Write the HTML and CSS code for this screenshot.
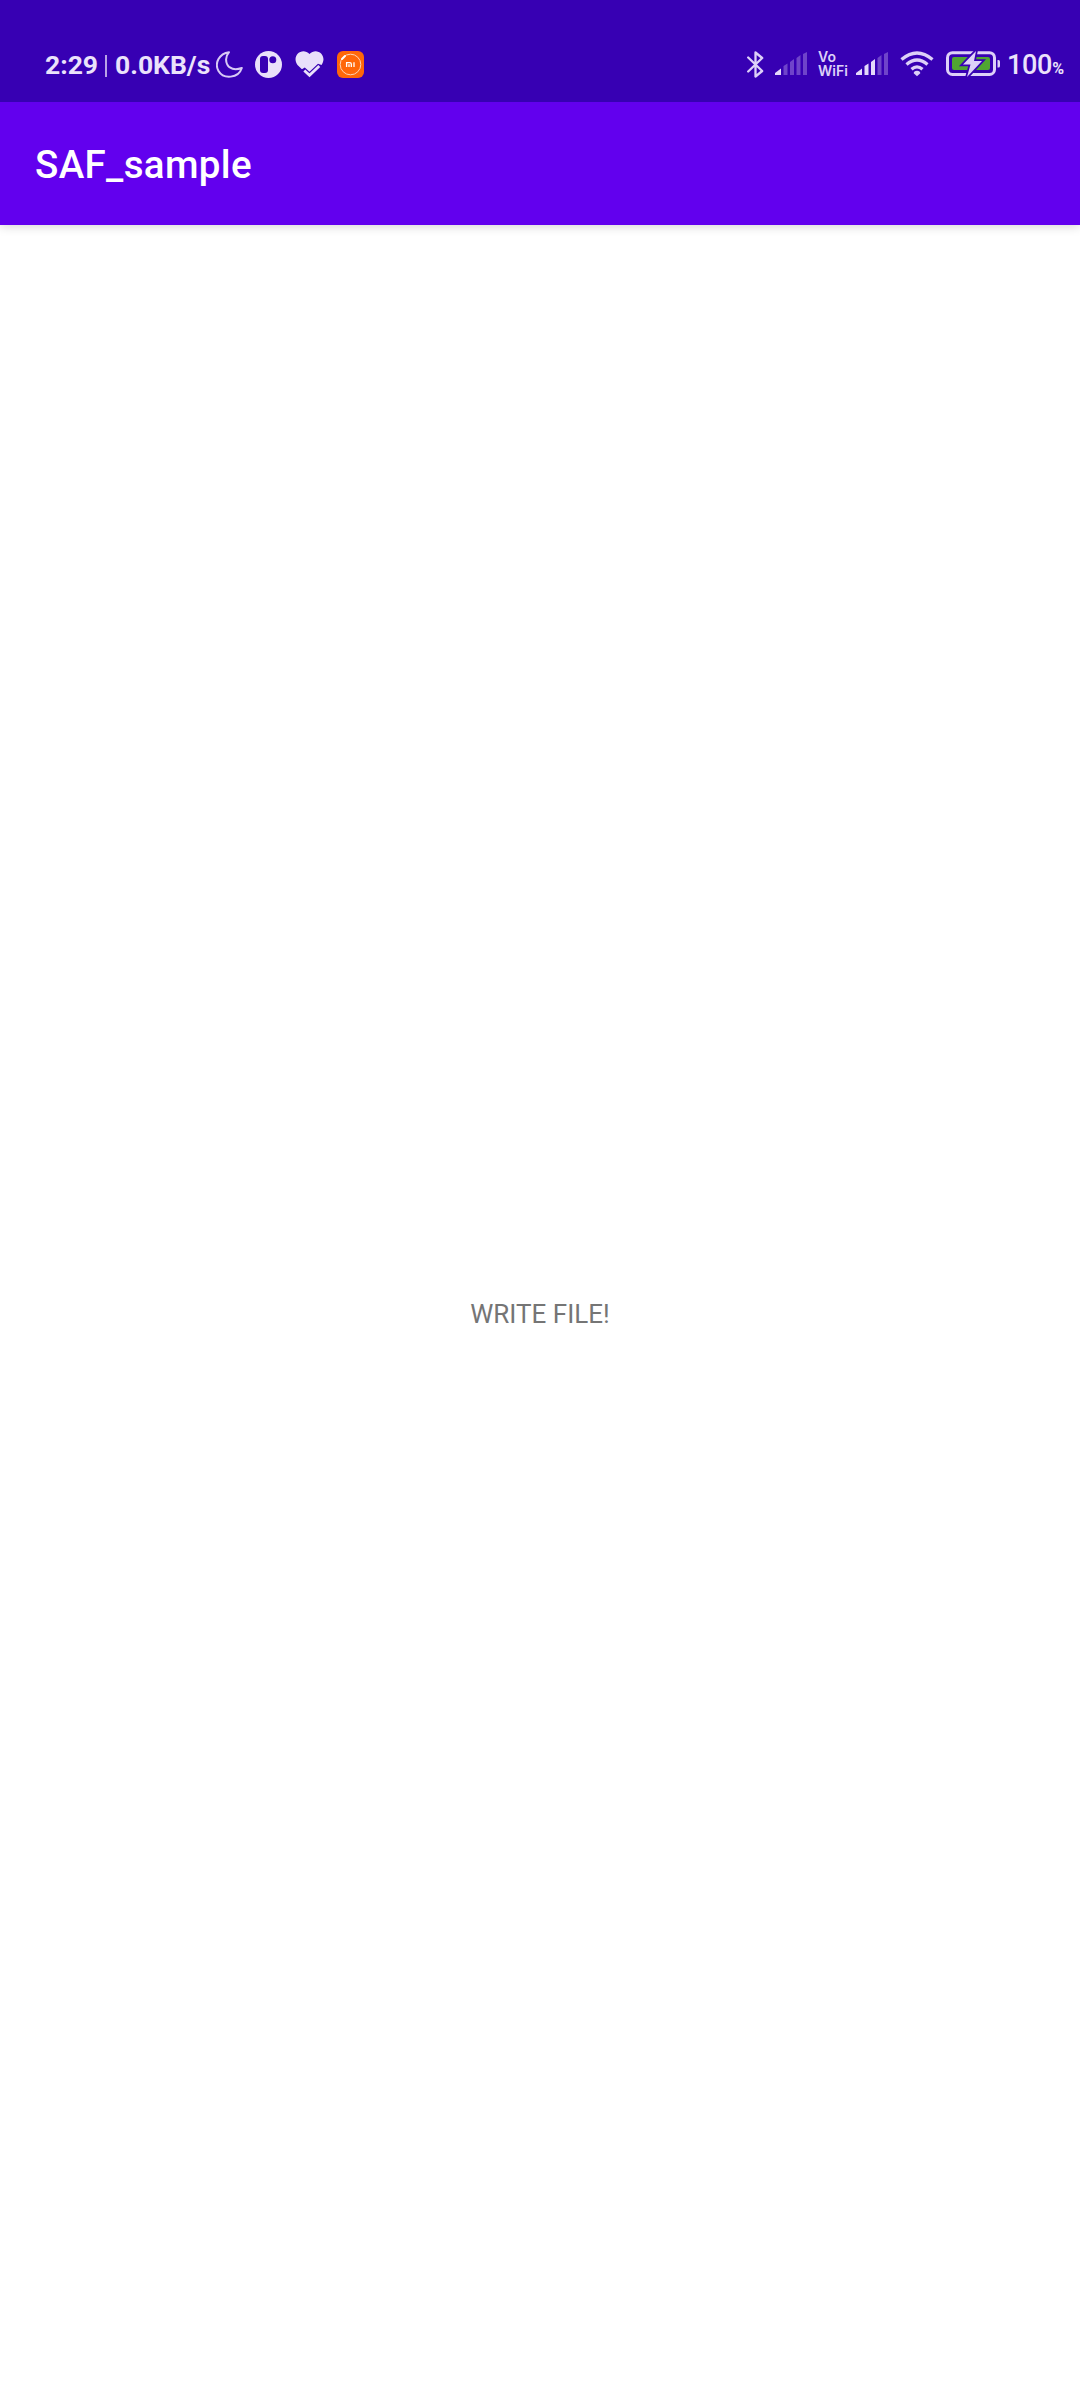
FILE: index.html
```html
<!DOCTYPE html>
<html lang="en">
<head>
<meta charset="utf-8">
<title>SAF_sample</title>
<link rel="stylesheet" href="styles.css">
</head>
<body>
<div class="screen">
  <header class="status">
    <div class="status-left">
      <span class="clock">2:29</span>
      <span class="divider"></span>
      <span class="speed">0.0KB/s</span>
      <svg class="icon moon" width="28" height="28" viewBox="0 0 28 28"><path d="M13 1.200C3.500 2.500-2 12 2.500 20c5 8.500 20 7.500 23.300-3C19 19.500 13 18 11 13c-1.600-4-.8-8.500 2-11.800z" fill="none" stroke="#d8c9f6" stroke-width="2" stroke-linejoin="round"/></svg>
      <svg class="icon round" width="27" height="27" viewBox="0 0 27 27"><circle cx="13.500" cy="13.500" r="13.500" fill="#e9e0fa"/><rect x="5" y="5" width="8" height="17" rx="3" fill="#3700b3"/><circle cx="17.800" cy="8.700" r="3.500" fill="#3700b3"/></svg>
      <svg class="icon heart" width="29" height="27" viewBox="0 0 29 27"><path d="M14.500 25.500 2.500 14C-4 5 7-4.500 14.500 3 22-4.500 33 5 26.500 14z" fill="#e9e0fa"/><path d="M6.500 18.500 9.800 16.500l4.700 4.200 8.500-8 3.500 1.300 2.500 0v13H6z" fill="#3700b3"/><path d="m9.300 19.500 5.200 4.800 9.800-9.300" fill="none" stroke="#e9e0fa" stroke-width="2.800"/></svg>
      <svg class="icon mi" width="27" height="27" viewBox="0 0 27 27"><rect width="27" height="27" rx="6" fill="#ff6709"/><circle cx="13.500" cy="13.500" r="10.300" fill="none" stroke="#ffd5b5" stroke-width="1"/><path d="m5 8 3-3" stroke="#fff" stroke-width="2" stroke-linecap="round"/><path d="M9.600 16v-4.300h3.200q1.500 0 1.500 1.300v3M12 13.300V16M17 11.200V16" fill="none" stroke="#fff" stroke-width="1.300"/></svg>
    </div>
    <div class="status-right">
      <svg class="icon bt" width="17" height="27" viewBox="0 0 17 27"><path d="m1.200 6.500 14 13.500-6.700 5.500v-24L15.200 7l-14 13.500" fill="none" stroke="#ddd0f8" stroke-width="2.300" stroke-linejoin="round" stroke-linecap="round"/></svg>
      <svg class="icon signal" width="33" height="24" viewBox="0 0 33 24"><path class="on" d="M0 23v-2l6-4.500V23z"/><path class="off" d="M8.500 23v-9l4-2.500V23zM15 23V10l4-3v16zM21.500 23V6l4-3v20zM28 23V2l4-2v23z"/></svg>
      <span class="vowifi"><span class="vo">Vo</span><span class="wf">WiFi</span></span>
      <svg class="icon signal signal-two" width="33" height="24" viewBox="0 0 33 24"><path class="on" d="M0 23v-2l6-4.500V23zM8.500 23v-9l4-2.500V23zM15 23V10l4-3v16z"/><path class="off" d="M21.500 23V6l4-3v20zM28 23V2l4-2v23z"/></svg>
      <svg class="icon wifi" width="34" height="26" viewBox="0 0 34 26"><path d="M1.500 8.500Q17-4.500 32.500 8.500M6.500 13.500Q17 4.500 27.500 13.500M11.500 18.300q5.500-4.800 11 0" fill="none" stroke="#ddd0f8" stroke-width="3.300"/><path d="m17 25.300-3.300-3q0-2.600 3.300-2.600t3.300 2.600z" fill="#ddd0f8"/></svg>
      <svg class="icon battery" width="55" height="26" viewBox="0 0 55 26"><rect x="1.500" y="1.700" width="47" height="21.800" rx="5" fill="none" stroke="#ddd0f8" stroke-width="3"/><rect x="6" y="6" width="38" height="13" rx="2" fill="#50a532"/><path d="M30 0 17 13.500h7.500L21 26 36 10h-8z" fill="#ddd0f8" stroke="#3700b3" stroke-width="3.500" paint-order="stroke"/><path d="M51.500 9h1q1.500 0 1.500 1.500V15q0 1.500-1.500 1.500h-1z" fill="#ddd0f8"/></svg>
      <span class="level">100<span class="percent">%</span></span>
    </div>
  </header>
  <div class="appbar"><h1 class="title">SAF_sample</h1></div>
  <main class="content"><span class="label">WRITE FILE!</span></main>
</div>
</body>
</html>
```
FILE: styles.css
```css
body {
  margin: 0;
  font-family: Roboto, sans-serif;
  background: #fff;
}
.screen {
  display: flex;
  flex-direction: column;
  width: 1080px;
  height: 2400px;
}
.status {
  position: relative;
  z-index: 1;
  display: flex;
  justify-content: space-between;
  box-sizing: border-box;
  height: 102px;
  padding: 51px 16px 24px 45px;
  background: #3700b3;
  color: #ebe2fb;
}
.status-left, .status-right {
  display: flex;
  align-items: flex-start;
  height: 27px;
}
.icon { display: block; flex: none; }
.clock, .speed {
  font-size: 26.500px;
  line-height: 27px;
  font-weight: 700;
  white-space: nowrap;
}
.clock { width: 60px; }
.divider {
  width: 2px;
  height: 22px;
  margin: 4px 8px 0 0;
  background: #b9a3e6;
}
.speed { width: 101px; }
.round { margin-left: 11px; }
.heart { margin-left: 13px; }
.mi { margin-left: 13px; }
.signal { margin: 1px 0 0 11px; }
.signal-two { margin-left: 8px; }
.on { fill: #e4d9fa; }
.off { fill: #6f44ca; }
.vowifi {
  display: flex;
  flex-direction: column;
  width: 30px;
  margin: -1px 0 0 10px;
  font: 600 14px/14px Inter, sans-serif;
  color: #ddd0f8;
  white-space: nowrap;
}
.wf { font-size: 14px; line-height: 13px; }
.wifi { margin-left: 11px; }
.battery { margin-left: 12px; }
.level {
  display: flex;
  align-items: baseline;
  width: 57px;
  margin: 1px 0 0 6px;
  font-size: 27px;
  line-height: 27px;
  letter-spacing: -0.3px;
  font-weight: 500;
}
.percent { font-size: 16px; line-height: 16px; font-weight: 700; }
.appbar {
  display: flex;
  align-items: center;
  box-sizing: border-box;
  height: 123px;
  padding: 2px 0 0 35px;
  background: #6200ee;
  box-shadow: 0 1px 10px rgba(0, 0, 0, 0.18);
}
.title {
  margin: 0;
  color: #fff;
  font-size: 38.500px;
  line-height: 46px;
  letter-spacing: 0.35px;
  font-weight: 500;
}
.content {
  flex: 1;
  display: flex;
  align-items: center;
  justify-content: center;
  padding-top: 2px;
}
.label {
  color: #757575;
  font-size: 26px;
  line-height: 32px;
}
```
